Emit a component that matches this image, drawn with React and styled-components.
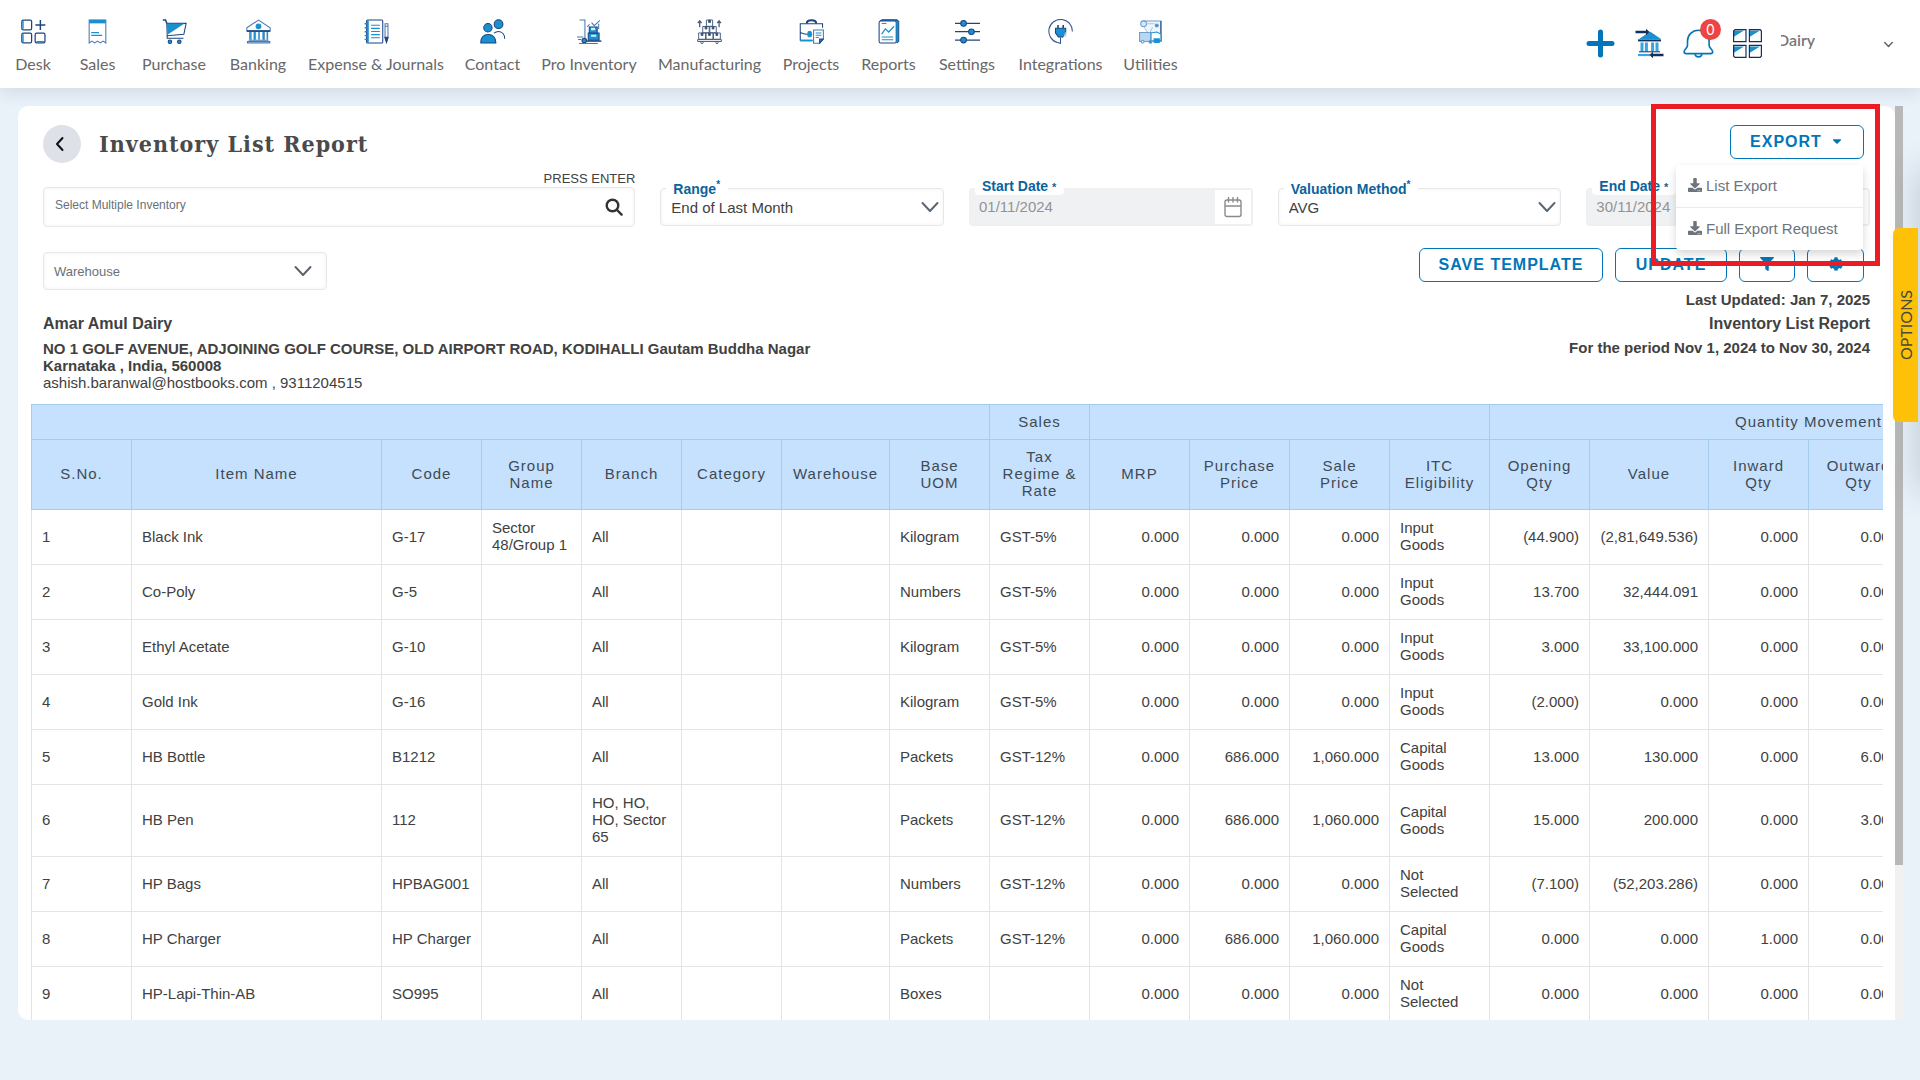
import React from "react";
import styled, { createGlobalStyle, css } from "styled-components";
import { FaDownload, FaFilter, FaCog, FaCaretDown } from "react-icons/fa";

const Global = createGlobalStyle`
  *, *::before, *::after { box-sizing: border-box; }
  body {
    margin: 0;
    background: #e9f1f9;
    color: #414141;
    font: 15px/17px "Liberation Sans", Arial, sans-serif;
  }
  button, input, select { font: inherit; color: inherit; }
`;

const BLUE = "#0076b8";
const LIGHT = "#1b90d0";
const NAVY = "#1d4580";
const LINE = "#e6e7e8";

const Page = styled.div`
  height: 100vh;
  display: flex;
  flex-direction: column;
  position: relative;
  overflow: hidden;
`;

const Header = styled.header`
  height: 88px;
  flex: none;
  display: flex;
  justify-content: space-between;
  background: #fff;
  box-shadow: 0 4px 16px rgba(40, 60, 80, 0.12);
  font-family: Lato, "Open Sans", sans-serif;
`;

const Nav = styled.nav`
  display: flex;
  padding-left: 1px;
`;

const NavItem = styled.a`
  width: ${(p) => p.$width}px;
  padding-top: 19px;
  display: flex;
  flex-direction: column;
  align-items: center;
  gap: 10px;
  color: #686868;
  font-size: 16px;
  line-height: 20px;
  white-space: nowrap;
  text-decoration: none;
  svg { width: 25px; height: 25px; flex: none; }
`;

const Tools = styled.div`
  display: flex;
  align-items: flex-start;
  gap: 18px;
  padding: 28px 25px 0 0;
`;

const ToolButton = styled.button`
  position: relative;
  width: 31px;
  height: 31px;
  padding: 0;
  border: 0;
  background: none;
  svg { display: block; width: 31px; height: 31px; }
`;

const Badge = styled.span`
  position: absolute;
  top: -9px;
  right: -7px;
  width: 21px;
  height: 21px;
  border-radius: 50%;
  background: #ef4444;
  color: #fff;
  font: 14px/21px Inter, sans-serif;
  text-align: center;
`;

const Account = styled.button`
  width: 114px;
  height: 28px;
  padding: 0 2px 0 0;
  border: 0;
  background: none;
  display: flex;
  align-items: center;
  justify-content: space-between;
  font: 600 16px/20px Lato, sans-serif;
  color: #777;
  svg { width: 9px; height: 9px; margin-top: 4px; }
`;

const AccountName = styled.span`
  overflow: hidden;
  text-indent: -4px;
  padding-bottom: 4px;
`;

const Main = styled.main`
  flex: 1;
  min-height: 0;
  display: flex;
  padding: 18px 17px 60px 18px;
`;

const Panel = styled.section`
  flex: 1;
  min-width: 0;
  background: #fff;
  border-radius: 10px 10px 0 10px;
  padding: 19px 12px 0 13px;
  overflow: hidden;
`;

const Track = styled.div`
  width: 8px;
  background: #f1f1f1;
`;

const Thumb = styled.div`
  height: 83%;
  background: #b8b8b8;
`;

const Content = styled.div`
  padding: 0 13px 0 12px;
`;

const TitleRow = styled.div`
  display: flex;
  justify-content: space-between;
  height: 38px;
`;

const TitleGroup = styled.div`
  display: flex;
  align-items: center;
  gap: 18px;
`;

const BackButton = styled.button`
  width: 38px;
  height: 38px;
  padding: 0;
  border: 0;
  border-radius: 50%;
  background: #dee2e8;
  display: grid;
  place-items: center;
  svg { width: 18px; height: 18px; margin-right: 4px; }
`;

const Title = styled.h1`
  margin: 0;
  font: 700 23px/28px "DejaVu Serif Condensed", "DejaVu Serif", serif;
  letter-spacing: 1px;
  color: #4a4a4a;
`;

const ExportArea = styled.div`
  position: relative;
  margin-right: 6px;
`;

const OutlineButton = styled.button`
  height: 34px;
  min-width: ${(p) => p.$width}px;
  padding: 0 4px 2px;
  border: 1px solid ${BLUE};
  border-radius: 6px;
  background: #fff;
  color: ${BLUE};
  font-weight: 700;
  font-size: 16px;
  letter-spacing: 1px;
  display: flex;
  align-items: center;
  justify-content: center;
  gap: 8px;
  svg { width: 14px; height: 14px; }
`;

const Menu = styled.ul`
  position: absolute;
  z-index: 3;
  top: 40px;
  right: 1px;
  width: 187px;
  margin: 0;
  padding: 0;
  list-style: none;
  background: #fff;
  border-radius: 4px;
  box-shadow: 0 4px 8px rgba(0, 0, 0, 0.16);
`;

const MenuItem = styled.li`
  & + & { border-top: 1px solid #e9ecef; }
`;

const MenuButton = styled.button`
  width: 100%;
  height: 42px;
  padding: 0 12px 2px;
  border: 0;
  background: none;
  display: flex;
  align-items: center;
  gap: 4px;
  color: #6c757d;
  white-space: nowrap;
  svg { width: 14px; height: 14px; }
`;

const Highlight = styled.div`
  position: absolute;
  z-index: 4;
  top: 104px;
  right: 40px;
  width: 229px;
  height: 162px;
  border: 5px solid #ec1c24;
  pointer-events: none;
`;

const Filters = styled.div`
  display: grid;
  grid-template-columns: repeat(6, 1fr);
  column-gap: 25px;
  align-items: end;
  margin-top: 8px;
`;

const SearchField = styled.div`
  grid-column: span 2;
  display: flex;
  flex-direction: column;
`;

const SearchLabel = styled.label`
  font-size: 13px;
  line-height: 16px;
  text-align: right;
`;

const box = css`
  border: 1px solid ${LINE};
  border-radius: 4px;
  background: #fff;
  box-shadow: inset 0 0 4px rgba(0, 0, 0, 0.05);
`;

const SearchBox = styled.div`
  ${box}
  height: 40px;
  display: flex;
  align-items: center;
  padding: 0 11px;
  input {
    flex: 1;
    min-width: 0;
    height: 36px;
    padding: 0 0 4px;
    border: 0;
    outline: 0;
    background: none;
    font-size: 12px;
  }
  input::placeholder { color: #6a7178; opacity: 1; }
  button { padding: 0; border: 0; background: none; display: flex; }
  svg { width: 18px; height: 18px; }
`;

const Field = styled.div`
  position: relative;
  height: 38px;
  margin-bottom: 1px;
`;

const FieldLabel = styled.label`
  position: absolute;
  z-index: 1;
  left: 6px;
  top: ${(p) => (p.$raised ? -9 : -6)}px;
  padding: 0 8px 0 7px;
  border-radius: 4px;
  background: #fff;
  color: #0b639c;
  font-size: 14px;
  font-weight: 700;
  line-height: 15px;
  sup { font-size: 10px; line-height: 1px; }
  small { font-size: 11px; }
`;

const SelectBox = styled.div`
  ${box}
  height: 38px;
  display: flex;
  align-items: center;
  position: relative;
  select {
    width: 100%;
    height: 36px;
    padding: 0 40px 0 10px;
    border: 0;
    outline: 0;
    appearance: none;
    background: none;
    font-size: ${(p) => (p.$muted ? 13 : 15)}px;
    color: ${(p) => (p.$muted ? "#6a7178" : "#414141")};
  }
  svg {
    position: absolute;
    right: ${(p) => (p.$muted ? 14 : 4)}px;
    top: 9px;
    width: 18px;
    height: 18px;
    pointer-events: none;
  }
`;

const DateBox = styled.div`
  height: 38px;
  display: flex;
  border: 2px solid #eff0f1;
  border-radius: 4px;
  overflow: hidden;
  input {
    flex: 1;
    min-width: 0;
    padding: 0 8px 2px;
    border: 0;
    background: #f0f1f3;
    color: #939393;
  }
  button {
    width: 36px;
    padding: 0;
    border: 0;
    background: #fff;
    display: grid;
    place-items: center;
  }
  svg { width: 18px; height: 22px; }
`;

const ActionRow = styled.div`
  display: flex;
  justify-content: space-between;
  height: 40px;
  margin-top: 21px;
`;

const WarehouseField = styled.div`
  width: calc((100% - 125px) / 6);
  padding-top: 4px;
`;

const Actions = styled.div`
  display: flex;
  align-items: flex-start;
  gap: 12px;
  margin-right: 6px;
`;

const Info = styled.div`
  display: flex;
  justify-content: space-between;
  font-weight: 700;
`;

const Company = styled.address`
  font-style: normal;
  padding-top: 24px;
  p { margin: 0; }
  p:last-child { font-weight: 400; }
`;

const InfoHeading = styled.h2`
  margin: 0;
  font-size: 16px;
  line-height: 24px;
`;

const CompanyName = styled(InfoHeading)`
  margin-bottom: 4px;
`;

const Period = styled.div`
  text-align: right;
  p { margin: 0; line-height: 24px; }
`;

const TableClip = styled.div`
  margin-top: 13px;
  overflow: hidden;
`;

const Table = styled.table`
  width: 2096px;
  table-layout: fixed;
  border-collapse: collapse;
`;

const Th = styled.th`
  height: ${(p) => (p.$group ? 35 : 70)}px;
  padding: 0 11px 2px;
  border: 1px solid #a3cdec;
  background: #c5e1fe;
  color: #3f4a55;
  font-weight: 400;
  letter-spacing: 1px;
`;

const Td = styled.td`
  height: 55px;
  padding: 9px 10px 11px;
  border: 1px solid #e4e4e4;
  text-align: ${(p) => (p.$num ? "right" : "left")};
`;

const OptionsTab = styled.button`
  position: absolute;
  z-index: 5;
  top: 228px;
  right: 2px;
  width: 25px;
  height: 194px;
  padding: 0;
  border: 0;
  border-radius: 6px 0 0 6px;
  background: #ffc107;
  color: #4a4a3a;
  font: 16px/25px Lato, sans-serif;
  writing-mode: vertical-rl;
  span { display: block; transform: rotate(180deg); }
`;

const DrawerEdge = styled.div`
  position: absolute;
  top: 170px;
  left: 100%;
  width: 20px;
  height: 320px;
  box-shadow: 0 0 32px rgba(50, 70, 100, 0.3);
`;

const Svg = ({ children, ...rest }) => (
  <svg viewBox="0 0 24 24" fill="none" stroke={NAVY} strokeWidth="1" aria-hidden="true" {...rest}>
    {children}
  </svg>
);

const DeskIcon = () => (
  <Svg strokeWidth="1.2">
    <rect x=".8" y="1" width="9.4" height="9.4" rx="1.4" />
    <rect x=".8" y="13.6" width="9.4" height="9.4" rx="1.4" />
    <rect x="13.6" y="13.6" width="9.4" height="9.4" rx="1.4" />
    <path d="M2 2v7.4M2 14.6v7.4M14.8 21.8h7.4" stroke={LIGHT} />
    <path d="M18.6 1v9.6M13.8 5.8h9.6" strokeWidth="1.4" />
  </Svg>
);
const SalesIcon = () => (
  <Svg>
    <path d="M4 1v22l2.6-1.8L9.3 23l2.7-1.8 2.7 1.8 2.7-1.8L20 23V1z" stroke="#4b78b0" />
    <path d="M4 .8h16v3.4H4z" fill={LIGHT} stroke="none" />
    <path d="M6 13h7.5M6 15.6h10.5" stroke={LIGHT} strokeWidth="1.2" />
  </Svg>
);
const PurchaseIcon = () => (
  <Svg>
    <path d="M.8 1h2.6l1.2 3.2" strokeWidth="1.4" />
    <path d="M4.6 4.2h18.6L21 14.6 5 16z" />
    <path d="M4.6 4.2h17L5.2 15z" fill={LIGHT} stroke="none" />
    <path d="M5 16v2.4h15.6" />
    <circle cx="7.6" cy="21.8" r="1.7" fill={LIGHT} />
    <circle cx="16.6" cy="21.8" r="1.7" fill={LIGHT} />
  </Svg>
);
const BankingIcon = () => (
  <Svg>
    <path d="M.8 8.4L12 1l11.2 7.4v3H.8z" stroke="#4b78b0" />
    <path d="M.8 11.6h22.4" strokeWidth="1.6" />
    <circle cx="12" cy="7" r="2.3" fill={LIGHT} stroke={LIGHT} />
    <path d="M3.8 12.5v7.5M8 12.5v7.5M12.5 12.5v7.5M16.5 12.5v7.5M20.5 12.5v7.5" stroke={LIGHT} strokeWidth="1.5" />
    <path d="M5 12.5v7.5M9.2 12.5v7.5M17.7 12.5v7.5" strokeWidth=".6" />
    <path d="M2.6 20.4h19M1.4 23h21.4v-1.4H1.4z" stroke="#4b78b0" fill="#9cc7e8" />
  </Svg>
);
const JournalIcon = () => (
  <Svg>
    <rect x="2.4" y="1" width="15.6" height="22" rx="1" />
    <path d="M3.6 1.4v21.2" stroke={LIGHT} strokeWidth="2" />
    <path d="M.6 4.6h3M.6 8.4h3M.6 12.2h3M.6 16h3M.6 19.6h3" stroke="#4b78b0" strokeWidth="1.3" />
    <path d="M6.8 6h8.4M6.8 9h8.4M6.8 12h8.4M6.8 15h8.4M6.8 18h8.4" stroke={LIGHT} />
    <path d="M20.2 7h2.8v11.4l-1.4 3.6-1.4-3.6zM20.2 7V4.6h2.8V7" stroke="#4b78b0" />
    <path d="M20.2 17.6H23L21.6 22.6z" fill={NAVY} />
  </Svg>
);
const ContactIcon = () => (
  <Svg>
    <circle cx="7.6" cy="8.4" r="4" fill={LIGHT} />
    <circle cx="17.8" cy="5" r="4.2" fill={LIGHT} />
    <path d="M.8 23c-.4-5 2.4-8.2 7.2-8.2 4.4 0 7.4 3.2 7.2 8.2z" fill={LIGHT} />
    <path d="M13.4 13.6c4.400-3.400 10.400-1.200 10.400 5.600" />
  </Svg>
);
const InventoryIcon = () => (
  <Svg>
    <path d="M2.5 1H7.6v18.5M0 17.3h6M1 19.6h3" stroke="#4b78b0" />
    <circle cx="7" cy="20.6" r="2.2" fill={LIGHT} />
    <path d="M9 21.2h14.4" strokeWidth="1.4" />
    <path d="M2 23.5h18" stroke="#4b78b0" />
    <path d="M10.8 13.4h10.4v7H10.8z" fill={LIGHT} />
    <path d="M11.8 7.6h7.6v5.8h-7.6z" fill={LIGHT} />
    <path d="M13.5 8.5h4v2.4h-4zM13.5 15h5v2h-5z" fill="#d8ecf8" stroke="none" />
    <path d="M14 3.4l2.5 3 5.5-5M20.8 4.5v4.6h-3M10 7.6l2-2.6" stroke="#4b78b0" />
  </Svg>
);
const ManufacturingIcon = () => (
  <Svg stroke="#435a7c" strokeWidth=".9">
    <path d="M9 1h6v6H9zM5.5 7.2h6.2v6H5.5zM12.3 7.2h6.2v6h-6.2zM1.6 13.4h6.6v6H1.6zM8.7 13.4h6.6v6H8.7zM15.8 13.4h6.6v6h-6.6z" />
    <path d="M11.2 1h1.7v2.4h-1.7zM7.8 7.3h1.7v2.3H7.8zM14.6 7.3h1.7v2.3h-1.7zM4 13.5h1.7v2.3H4zM11.1 13.5h1.7v2.3h-1.7zM18.2 13.5h1.7v2.3h-1.7z" fill={NAVY} />
    <path d="M.6 19.8h22.8v1.8H.6z" />
    <circle cx="4.8" cy="22.6" r="1.1" /><circle cx="19.2" cy="22.6" r="1.1" />
    <path d="M2.6 8V2M.8 4L2.6 1.6 4.4 4M21.2 8V2M19.4 4l1.8-2.400L23 4" strokeWidth="1.2" />
  </Svg>
);
const ProjectsIcon = () => (
  <Svg>
    <path d="M22.6 8.5V4.6H1.2v15.8h12M1.2 13c3 1.6 6 2 11.5 1.8" />
    <path d="M7.5 4.2c0-4 9-4 9 0" strokeWidth="2" />
    <path d="M1.2 20.8h11.6" stroke={LIGHT} strokeWidth="1.6" />
    <rect x="8.6" y="12" width="3.2" height="5" rx="1" fill={LIGHT} stroke={LIGHT} />
    <path d="M14 10.6h9.4v8.6l-3.6 4H14z" stroke="#4b78b0" fill="#fff" />
    <path d="M16 13.4h5.5M16 15.6h5.5M16 17.8h3" stroke={LIGHT} />
    <path d="M19.8 23.2v-4h3.6z" fill={LIGHT} />
  </Svg>
);
const ReportsIcon = () => (
  <Svg>
    <path d="M4 1.6L6 .8h14l1.8 1.6v19L20 23" fill={LIGHT} />
    <rect x="3" y="2" width="16.4" height="21" rx="1.4" fill="#fff" />
    <path d="M20.5 2v20" stroke={LIGHT} strokeWidth="1.8" />
    <path d="M5.4 14.5l3.6-5 3.2 3L17.4 7" stroke={LIGHT} strokeWidth="1.2" />
    <path d="M5.5 4.4H10M5.5 17.3h11M5.5 20h11" stroke={LIGHT} />
  </Svg>
);
const SettingsIcon = () => (
  <Svg>
    <path d="M0 4.2h24M0 12.2h24M0 20.2h24" strokeWidth="1.2" />
    <circle cx="8.2" cy="4.2" r="2.7" fill={LIGHT} />
    <circle cx="15.8" cy="12.2" r="2.7" fill={LIGHT} />
    <circle cx="8.2" cy="20.2" r="2.7" fill={LIGHT} />
  </Svg>
);
const IntegrationsIcon = () => (
  <Svg>
    <path d="M23.4 12A11.3 11.3 0 1 0 9 22.6l3 .8v-5.6" stroke="#35568c" />
    <path d="M7.2 8.8h9.8v4.6l-2.6 3.8h-4.400l-2.8-3.8z" fill={LIGHT} />
    <path d="M9.6 5.8v3M14.6 5.8v3" strokeWidth="1.5" />
    <path d="M15 17l2-4.4V17" fill="#fff" stroke="#8bb4da" strokeWidth=".8" />
  </Svg>
);
const UtilitiesIcon = () => (
  <Svg stroke="#6f9fcd">
    <path d="M4 2h18v19h-7" fill="#eef5fb" />
    <path d="M22 2v19.5" stroke={NAVY} />
    <circle cx="5.4" cy="4.6" r="2.8" fill="#d5e7f5" />
    <path d="M6 8l4 6M14 8l-3 6M8 4.5h8" stroke="#a8c8e6" />
    <circle cx="18" cy="6.2" r="1.5" fill={LIGHT} />
    <path d="M1.5 13h11v8.5H1.5z" fill="#b9d7ee" />
    <path d="M12.5 13.5l5.5-1 4 2v6.5h-9.5z" fill="#fff" stroke={LIGHT} />
    <path d="M15 18.5h6v4.5h-6z" fill={LIGHT} stroke="none" />
    <circle cx="4.5" cy="21.8" r="1.3" fill="#fff" />
    <circle cx="12" cy="21.8" r="1.5" fill={LIGHT} />
  </Svg>
);

const PlusIcon = () => (
  <svg viewBox="0 0 31 31" stroke={BLUE} strokeWidth="5" strokeLinecap="round" aria-hidden="true">
    <path d="M15.5 4v23M4 15.5h23" />
  </svg>
);
const TransferIcon = () => (
  <svg viewBox="0 0 31 31" fill="none" aria-hidden="true">
    <path d="M5 11L16 3.5 27 11z" fill={LIGHT} />
    <path d="M4 12.4h23" stroke="#14305f" strokeWidth="2" />
    <path d="M8 14.5v9M12.4 14.5v9M18.6 14.5v9M23 14.5v9" stroke="#3ba3dd" strokeWidth="3" />
    <path d="M5 23.8h21" stroke="#14305f" strokeWidth="1" />
    <path d="M4 27h12" stroke="#3ba3dd" strokeWidth="2.2" />
    <path d="M1.5 4h12M17 27h12.5" stroke="#14305f" strokeWidth="2.6" />
    <path d="M12 .8L15.5 4 12 7.2zM19 23.8L15.5 27l3.5 3.2z" fill="#14305f" />
  </svg>
);
const BellIcon = () => (
  <svg viewBox="0 0 31 31" fill="none" stroke={BLUE} strokeWidth="1.6" aria-hidden="true">
    <path d="M4.5 17.5V13a10.8 10.8 0 0 1 21.6 0v4.5c0 2.2 3.6 4.3 3.6 6.3 0 1.2-1 1.8-2.2 1.8H3.3c-1.3 0-2.2-.6-2.2-1.8 0-2 3.4-4.100 3.4-6.3z" />
    <path d="M12 26.2c.6 3.6 6.4 3.6 7 0" />
  </svg>
);
const AppsIcon = () => (
  <svg viewBox="0 0 31 31" fill="none" stroke="#14305f" strokeWidth="1.2" aria-hidden="true">
    <path d="M1.5 9V2.5H12zM17.5 9V2.5H28zM1.5 25v-6.5H12zM17.5 25v-6.5H28z" fill={LIGHT} stroke="none" />
    <path d="M3 1.6h11v12H1.6V3zM17.4 1.6h10.8L29.4 3v10.6h-12zM1.6 17.4H14v12H3L1.6 28zM17.4 17.4h12V28l-1.2 1.4H17.4z" />
  </svg>
);
const Chevron = ({ stroke = "#5b6670", width = 2 }) => (
  <svg viewBox="0 0 18 18" fill="none" stroke={stroke} strokeWidth={width} strokeLinecap="round" strokeLinejoin="round" aria-hidden="true">
    <path d="M1.5 5L9 13l7.5-8" />
  </svg>
);
const CalendarIcon = () => (
  <svg viewBox="0 0 18 22" fill="none" stroke="#8a8a8a" strokeWidth="1.4" aria-hidden="true">
    <rect x="1" y="4" width="16" height="16.5" rx="2" />
    <path d="M1 10h16M4.5 1v5.5M9 1v5.5M13.5 1v5.5" />
  </svg>
);

const NAV = [
  ["Desk", 64, DeskIcon], ["Sales", 65, SalesIcon], ["Purchase", 88, PurchaseIcon],
  ["Banking", 80, BankingIcon], ["Expense & Journals", 156, JournalIcon], ["Contact", 77, ContactIcon],
  ["Pro Inventory", 116, InventoryIcon], ["Manufacturing", 125, ManufacturingIcon], ["Projects", 78, ProjectsIcon],
  ["Reports", 77, ReportsIcon], ["Settings", 80, SettingsIcon], ["Integrations", 107, IntegrationsIcon],
  ["Utilities", 73, UtilitiesIcon],
];

const COLUMNS = [
  ["S.No.", 100], ["Item Name", 250], ["Code", 100], ["Group Name", 100], ["Branch", 100],
  ["Category", 100], ["Warehouse", 108], ["Base UOM", 100], ["Tax Regime & Rate", 100], ["MRP", 100],
  ["Purchase Price", 100], ["Sale Price", 100], ["ITC Eligibility", 100], ["Opening Qty", 100],
  ["Value", 119], ["Inward Qty", 100], ["Outward Qty", 100], ["", 100], ["", 119],
];
const NUMERIC = new Set([9, 10, 11, 13, 14, 15, 16]);

const ROWS = [
  ["1", "Black Ink", "G-17", "Sector 48/Group 1", "All", "", "", "Kilogram", "GST-5%", "0.000", "0.000", "0.000", "Input Goods", "(44.900)", "(2,81,649.536)", "0.000", "0.000"],
  ["2", "Co-Poly", "G-5", "", "All", "", "", "Numbers", "GST-5%", "0.000", "0.000", "0.000", "Input Goods", "13.700", "32,444.091", "0.000", "0.000"],
  ["3", "Ethyl Acetate", "G-10", "", "All", "", "", "Kilogram", "GST-5%", "0.000", "0.000", "0.000", "Input Goods", "3.000", "33,100.000", "0.000", "0.000"],
  ["4", "Gold Ink", "G-16", "", "All", "", "", "Kilogram", "GST-5%", "0.000", "0.000", "0.000", "Input Goods", "(2.000)", "0.000", "0.000", "0.000"],
  ["5", "HB Bottle", "B1212", "", "All", "", "", "Packets", "GST-12%", "0.000", "686.000", "1,060.000", "Capital Goods", "13.000", "130.000", "0.000", "6.000"],
  ["6", "HB Pen", "112", "", "HO, HO, HO, Sector 65", "", "", "Packets", "GST-12%", "0.000", "686.000", "1,060.000", "Capital Goods", "15.000", "200.000", "0.000", "3.000"],
  ["7", "HP Bags", "HPBAG001", "", "All", "", "", "Numbers", "GST-12%", "0.000", "0.000", "0.000", "Not Selected", "(7.100)", "(52,203.286)", "0.000", "0.000"],
  ["8", "HP Charger", "HP Charger", "", "All", "", "", "Packets", "GST-12%", "0.000", "686.000", "1,060.000", "Capital Goods", "0.000", "0.000", "1.000", "0.000"],
  ["9", "HP-Lapi-Thin-AB", "SO995", "", "All", "", "", "Boxes", "", "0.000", "0.000", "0.000", "Not Selected", "0.000", "0.000", "0.000", "0.000"],
];

const SelectField = ({ id, label, value }) => (
  <Field>
    <FieldLabel htmlFor={id}>{label}<sup>*</sup></FieldLabel>
    <SelectBox>
      <select id={id} defaultValue={value}><option>{value}</option></select>
      <Chevron />
    </SelectBox>
  </Field>
);

const DateField = ({ id, label, value }) => (
  <Field>
    <FieldLabel htmlFor={id} $raised>{label} <small>*</small></FieldLabel>
    <DateBox>
      <input id={id} type="text" value={value} disabled readOnly />
      <button type="button" aria-label={label}><CalendarIcon /></button>
    </DateBox>
  </Field>
);

export default function App() {
  return (
    <Page>
      <Global />
      <Header>
        <Nav>
          {NAV.map(([name, width, Icon]) => (
            <NavItem key={name} href="#" $width={width}><Icon />{name}</NavItem>
          ))}
        </Nav>
        <Tools>
          <ToolButton aria-label="Add"><PlusIcon /></ToolButton>
          <ToolButton aria-label="Bank transfer"><TransferIcon /></ToolButton>
          <ToolButton aria-label="Notifications"><BellIcon /><Badge>0</Badge></ToolButton>
          <ToolButton aria-label="Apps"><AppsIcon /></ToolButton>
          <Account>
            <AccountName>Dairy</AccountName>
            <Chevron stroke="#666" width={3} />
          </Account>
        </Tools>
      </Header>

      <Main>
        <Panel>
          <Content>
            <TitleRow>
              <TitleGroup>
                <BackButton aria-label="Back">
                  <svg viewBox="0 0 18 18" fill="none" stroke="#111" strokeWidth="2" strokeLinecap="round" strokeLinejoin="round" aria-hidden="true">
                    <path d="M11.5 3L6 9l5.5 6" />
                  </svg>
                </BackButton>
                <Title>Inventory List Report</Title>
              </TitleGroup>
              <ExportArea>
                <OutlineButton $width={134}>EXPORT <FaCaretDown /></OutlineButton>
                <Menu>
                  <MenuItem><MenuButton><FaDownload />List Export</MenuButton></MenuItem>
                  <MenuItem><MenuButton><FaDownload />Full Export Request</MenuButton></MenuItem>
                </Menu>
              </ExportArea>
            </TitleRow>

            <Filters>
              <SearchField>
                <SearchLabel htmlFor="inventory">PRESS ENTER</SearchLabel>
                <SearchBox>
                  <input id="inventory" type="text" placeholder="Select Multiple Inventory" />
                  <button type="button" aria-label="Search">
                    <svg viewBox="0 0 18 18" fill="none" stroke="#333" strokeWidth="2.4" strokeLinecap="round" aria-hidden="true">
                      <circle cx="7.5" cy="7.5" r="5.8" /><path d="M12 12l4.6 4.6" />
                    </svg>
                  </button>
                </SearchBox>
              </SearchField>
              <SelectField id="range" label="Range" value="End of Last Month" />
              <DateField id="start" label="Start Date" value="01/11/2024" />
              <SelectField id="valuation" label="Valuation Method" value="AVG" />
              <DateField id="end" label="End Date" value="30/11/2024" />
            </Filters>

            <ActionRow>
              <WarehouseField>
                <SelectBox $muted>
                  <select aria-label="Warehouse" defaultValue="Warehouse"><option>Warehouse</option></select>
                  <Chevron />
                </SelectBox>
              </WarehouseField>
              <Actions>
                <OutlineButton $width={184}>SAVE TEMPLATE</OutlineButton>
                <OutlineButton $width={112}>UPDATE</OutlineButton>
                <OutlineButton $width={56} aria-label="Filter"><FaFilter /></OutlineButton>
                <OutlineButton $width={57} aria-label="Settings"><FaCog /></OutlineButton>
              </Actions>
            </ActionRow>

            <Info>
              <Company>
                <CompanyName>Amar Amul Dairy</CompanyName>
                <p>NO 1 GOLF AVENUE, ADJOINING GOLF COURSE, OLD AIRPORT ROAD, KODIHALLI Gautam Buddha Nagar</p>
                <p>Karnataka , India, 560008</p>
                <p>ashish.baranwal@hostbooks.com , 9311204515</p>
              </Company>
              <Period>
                <p>Last Updated: Jan 7, 2025</p>
                <InfoHeading>Inventory List Report</InfoHeading>
                <p>For the period Nov 1, 2024 to Nov 30, 2024</p>
              </Period>
            </Info>
          </Content>

          <TableClip>
            <Table>
              <colgroup>
                {COLUMNS.map(([, width], i) => <col key={i} style={{ width }} />)}
              </colgroup>
              <thead>
                <tr>
                  <Th $group colSpan={8} />
                  <Th $group>Sales</Th>
                  <Th $group colSpan={4} />
                  <Th $group colSpan={6}>Quantity Movement</Th>
                </tr>
                <tr>{COLUMNS.map(([name], i) => <Th key={i}>{name}</Th>)}</tr>
              </thead>
              <tbody>
                {ROWS.map((row) => (
                  <tr key={row[0]}>
                    {COLUMNS.map((_, i) => <Td key={i} $num={NUMERIC.has(i)}>{row[i]}</Td>)}
                  </tr>
                ))}
              </tbody>
            </Table>
          </TableClip>
        </Panel>
        <Track><Thumb /></Track>
      </Main>

      <Highlight />
      <DrawerEdge />
      <OptionsTab><span>OPTIONS</span></OptionsTab>
    </Page>
  );
}
